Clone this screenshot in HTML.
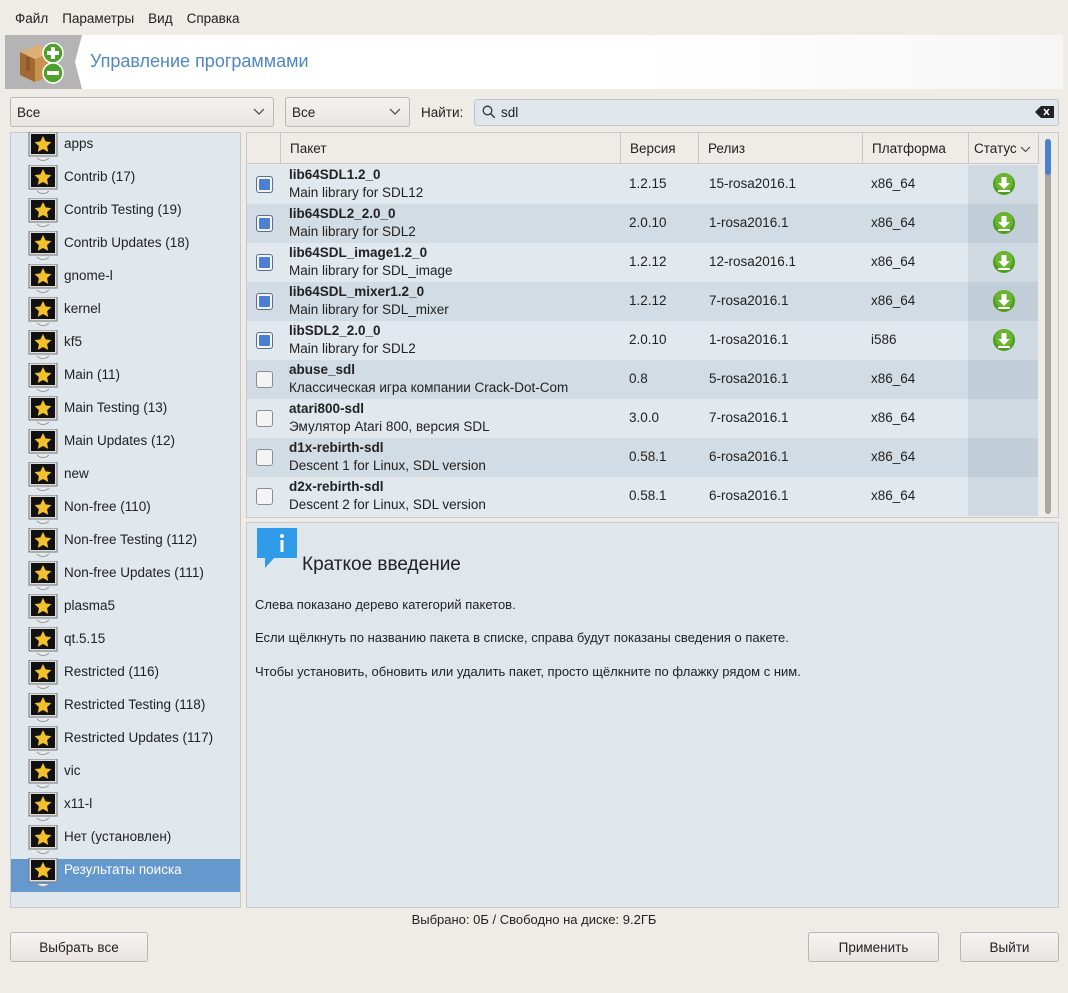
<!DOCTYPE html>
<html><head><meta charset="utf-8">
<style>
*{box-sizing:border-box;margin:0;padding:0}
body{width:1068px;height:993px;background:#efebe7;font-family:"Liberation Sans","DejaVu Sans",sans-serif;font-size:13px;color:#222;position:relative;overflow:hidden}
.a{position:absolute}
.menu span{margin-right:14px}
.combo{position:absolute;height:30px;border:1px solid #bdb9b4;border-radius:3px;background:linear-gradient(#f4f2f0,#e8e5e2);padding:7px 6px;font-size:13.5px}
.combo svg{position:absolute;right:8px;top:10px}
.left{left:10px;top:132px;width:231px;height:776px;background:#e0e7ed;border:1px solid #c6c9cc}
.it{position:absolute;left:0;width:229px;height:33px}
.it svg{position:absolute;left:17px;top:0}
.it span{position:absolute;left:53px;top:4px;font-size:13.5px}
.sel{background:#6599cd;color:#fff}
.tbl{left:246px;top:132px;width:813px;height:386px;border:1px solid #c6c9cc;background:#efebe7;overflow:hidden}
.hdr{position:absolute;top:0;height:31px;border-bottom:1px solid #c6c9cc;border-right:1px solid #c6c9cc;background:#efebe7;padding:8px 9px;font-size:13.5px;white-space:nowrap}
.row{position:absolute;left:0;width:791px;height:39px}
.row div{position:absolute;font-size:13.5px}
.cb{left:9px;top:11px;width:17px;height:17px;border:1px solid #8a8d90;border-radius:3px;background:#f4f4f4}
.cb.on::after{content:"";position:absolute;left:2px;top:2px;width:11px;height:11px;background:#4a7fd4;border-radius:1px}
.cb.on{border-color:#5a6f90}
.st{left:721px;top:0;width:70px;height:39px}
.info{left:246px;top:522px;width:813px;height:386px;background:#dfe6ec;border:1px solid #c6c9cc}
.btn{position:absolute;top:932px;height:30px;border:1px solid #b9b5b0;border-radius:3px;background:linear-gradient(#f6f4f2,#e7e4e1);text-align:center;padding-top:7px;font-size:13.5px}
</style></head><body>
<div class="a menu" style="left:15px;top:11px;font-size:13.5px"><span>Файл</span><span>Параметры</span><span>Вид</span><span>Справка</span></div>

<div class="a" style="left:5px;top:35px;width:1058px;height:54px;background:linear-gradient(90deg,#fff,#fff 60%,#f6f6f6)"></div>
<svg class="a" style="left:5px;top:35px" width="80" height="54"><polygon points="0,0 77,0 70,27 77,54 0,54" fill="#b4b4b4"/>
<polygon points="15,17 33,10 48,17 48,40 30,47 15,40" fill="#c9934f"/><polygon points="15,17 30,24 30,47 15,40" fill="#a06a30"/><polygon points="15,17 33,10 48,17 30,24" fill="#ddb078"/><rect x="21" y="22" width="4" height="14" fill="#8a5a28"/>
<circle cx="48" cy="18" r="10" fill="#4da02a" stroke="#fff" stroke-width="1.5"/><rect x="42" y="16" width="12" height="4" fill="#fff"/><rect x="46" y="12" width="4" height="12" fill="#fff"/>
<circle cx="48" cy="38" r="10" fill="#4da02a" stroke="#fff" stroke-width="1.5"/><rect x="42" y="36" width="12" height="4" fill="#fff"/></svg>
<div class="a" style="left:90px;top:51px;font-size:18px;color:#4f86c6">Управление программами</div>

<div class="combo" style="left:10px;top:97px;width:264px">Все<svg width="12" height="8"><path d="M1 1l5 5 5-5" stroke="#444" fill="none" stroke-width="1.2"/></svg></div>
<div class="combo" style="left:285px;top:97px;width:125px">Все<svg width="12" height="8"><path d="M1 1l5 5 5-5" stroke="#444" fill="none" stroke-width="1.2"/></svg></div>
<div class="a" style="left:421px;top:105px;font-size:13.5px">Найти:</div>
<div class="a" style="left:474px;top:99px;width:585px;height:27px;border:1px solid #c3c6c9;border-radius:3px;background:#dfe6ec"></div>
<svg class="a" style="left:482px;top:105px" width="14" height="14"><circle cx="5.5" cy="5.5" r="4.3" stroke="#333" fill="none" stroke-width="1.3"/><path d="M8.7 8.7l4 4" stroke="#333" stroke-width="1.4"/></svg>
<div class="a" style="left:501px;top:105px;font-size:13.5px">sdl</div>
<svg class="a" style="left:1035px;top:105px" width="19" height="14"><path d="M0 7l6-6h13v12H6z" fill="#222"/><path d="M9 4l5 6M14 4l-5 6" stroke="#fff" stroke-width="1.5"/></svg>

<div class="a left">
<div style="position:absolute;left:0;top:726px;width:229px;height:33px" class="sel"></div>
<div class="it" style="top:-1px"><svg width="30" height="33"><rect x="1" y="0" width="28" height="24" fill="#ddd" stroke="#777"/><rect x="3" y="2" width="24" height="20" fill="#111"/><path d="M15 4l2.6 5.4 5.8.7-4.3 4 1.1 5.8L15 17l-5.2 2.9 1.1-5.8-4.3-4 5.8-.7z" fill="#f3c12c"/><path d="M9 26q6 5 12 0" stroke="#999" fill="#eee"/></svg><span>apps</span></div>
<div class="it" style="top:32px"><svg width="30" height="33"><rect x="1" y="0" width="28" height="24" fill="#ddd" stroke="#777"/><rect x="3" y="2" width="24" height="20" fill="#111"/><path d="M15 4l2.6 5.4 5.8.7-4.3 4 1.1 5.8L15 17l-5.2 2.9 1.1-5.8-4.3-4 5.8-.7z" fill="#f3c12c"/><path d="M9 26q6 5 12 0" stroke="#999" fill="#eee"/></svg><span>Contrib (17)</span></div>
<div class="it" style="top:65px"><svg width="30" height="33"><rect x="1" y="0" width="28" height="24" fill="#ddd" stroke="#777"/><rect x="3" y="2" width="24" height="20" fill="#111"/><path d="M15 4l2.6 5.4 5.8.7-4.3 4 1.1 5.8L15 17l-5.2 2.9 1.1-5.8-4.3-4 5.8-.7z" fill="#f3c12c"/><path d="M9 26q6 5 12 0" stroke="#999" fill="#eee"/></svg><span>Contrib Testing (19)</span></div>
<div class="it" style="top:98px"><svg width="30" height="33"><rect x="1" y="0" width="28" height="24" fill="#ddd" stroke="#777"/><rect x="3" y="2" width="24" height="20" fill="#111"/><path d="M15 4l2.6 5.4 5.8.7-4.3 4 1.1 5.8L15 17l-5.2 2.9 1.1-5.8-4.3-4 5.8-.7z" fill="#f3c12c"/><path d="M9 26q6 5 12 0" stroke="#999" fill="#eee"/></svg><span>Contrib Updates (18)</span></div>
<div class="it" style="top:131px"><svg width="30" height="33"><rect x="1" y="0" width="28" height="24" fill="#ddd" stroke="#777"/><rect x="3" y="2" width="24" height="20" fill="#111"/><path d="M15 4l2.6 5.4 5.8.7-4.3 4 1.1 5.8L15 17l-5.2 2.9 1.1-5.8-4.3-4 5.8-.7z" fill="#f3c12c"/><path d="M9 26q6 5 12 0" stroke="#999" fill="#eee"/></svg><span>gnome-l</span></div>
<div class="it" style="top:164px"><svg width="30" height="33"><rect x="1" y="0" width="28" height="24" fill="#ddd" stroke="#777"/><rect x="3" y="2" width="24" height="20" fill="#111"/><path d="M15 4l2.6 5.4 5.8.7-4.3 4 1.1 5.8L15 17l-5.2 2.9 1.1-5.8-4.3-4 5.8-.7z" fill="#f3c12c"/><path d="M9 26q6 5 12 0" stroke="#999" fill="#eee"/></svg><span>kernel</span></div>
<div class="it" style="top:197px"><svg width="30" height="33"><rect x="1" y="0" width="28" height="24" fill="#ddd" stroke="#777"/><rect x="3" y="2" width="24" height="20" fill="#111"/><path d="M15 4l2.6 5.4 5.8.7-4.3 4 1.1 5.8L15 17l-5.2 2.9 1.1-5.8-4.3-4 5.8-.7z" fill="#f3c12c"/><path d="M9 26q6 5 12 0" stroke="#999" fill="#eee"/></svg><span>kf5</span></div>
<div class="it" style="top:230px"><svg width="30" height="33"><rect x="1" y="0" width="28" height="24" fill="#ddd" stroke="#777"/><rect x="3" y="2" width="24" height="20" fill="#111"/><path d="M15 4l2.6 5.4 5.8.7-4.3 4 1.1 5.8L15 17l-5.2 2.9 1.1-5.8-4.3-4 5.8-.7z" fill="#f3c12c"/><path d="M9 26q6 5 12 0" stroke="#999" fill="#eee"/></svg><span>Main (11)</span></div>
<div class="it" style="top:263px"><svg width="30" height="33"><rect x="1" y="0" width="28" height="24" fill="#ddd" stroke="#777"/><rect x="3" y="2" width="24" height="20" fill="#111"/><path d="M15 4l2.6 5.4 5.8.7-4.3 4 1.1 5.8L15 17l-5.2 2.9 1.1-5.8-4.3-4 5.8-.7z" fill="#f3c12c"/><path d="M9 26q6 5 12 0" stroke="#999" fill="#eee"/></svg><span>Main Testing (13)</span></div>
<div class="it" style="top:296px"><svg width="30" height="33"><rect x="1" y="0" width="28" height="24" fill="#ddd" stroke="#777"/><rect x="3" y="2" width="24" height="20" fill="#111"/><path d="M15 4l2.6 5.4 5.8.7-4.3 4 1.1 5.8L15 17l-5.2 2.9 1.1-5.8-4.3-4 5.8-.7z" fill="#f3c12c"/><path d="M9 26q6 5 12 0" stroke="#999" fill="#eee"/></svg><span>Main Updates (12)</span></div>
<div class="it" style="top:329px"><svg width="30" height="33"><rect x="1" y="0" width="28" height="24" fill="#ddd" stroke="#777"/><rect x="3" y="2" width="24" height="20" fill="#111"/><path d="M15 4l2.6 5.4 5.8.7-4.3 4 1.1 5.8L15 17l-5.2 2.9 1.1-5.8-4.3-4 5.8-.7z" fill="#f3c12c"/><path d="M9 26q6 5 12 0" stroke="#999" fill="#eee"/></svg><span>new</span></div>
<div class="it" style="top:362px"><svg width="30" height="33"><rect x="1" y="0" width="28" height="24" fill="#ddd" stroke="#777"/><rect x="3" y="2" width="24" height="20" fill="#111"/><path d="M15 4l2.6 5.4 5.8.7-4.3 4 1.1 5.8L15 17l-5.2 2.9 1.1-5.8-4.3-4 5.8-.7z" fill="#f3c12c"/><path d="M9 26q6 5 12 0" stroke="#999" fill="#eee"/></svg><span>Non-free (110)</span></div>
<div class="it" style="top:395px"><svg width="30" height="33"><rect x="1" y="0" width="28" height="24" fill="#ddd" stroke="#777"/><rect x="3" y="2" width="24" height="20" fill="#111"/><path d="M15 4l2.6 5.4 5.8.7-4.3 4 1.1 5.8L15 17l-5.2 2.9 1.1-5.8-4.3-4 5.8-.7z" fill="#f3c12c"/><path d="M9 26q6 5 12 0" stroke="#999" fill="#eee"/></svg><span>Non-free Testing (112)</span></div>
<div class="it" style="top:428px"><svg width="30" height="33"><rect x="1" y="0" width="28" height="24" fill="#ddd" stroke="#777"/><rect x="3" y="2" width="24" height="20" fill="#111"/><path d="M15 4l2.6 5.4 5.8.7-4.3 4 1.1 5.8L15 17l-5.2 2.9 1.1-5.8-4.3-4 5.8-.7z" fill="#f3c12c"/><path d="M9 26q6 5 12 0" stroke="#999" fill="#eee"/></svg><span>Non-free Updates (111)</span></div>
<div class="it" style="top:461px"><svg width="30" height="33"><rect x="1" y="0" width="28" height="24" fill="#ddd" stroke="#777"/><rect x="3" y="2" width="24" height="20" fill="#111"/><path d="M15 4l2.6 5.4 5.8.7-4.3 4 1.1 5.8L15 17l-5.2 2.9 1.1-5.8-4.3-4 5.8-.7z" fill="#f3c12c"/><path d="M9 26q6 5 12 0" stroke="#999" fill="#eee"/></svg><span>plasma5</span></div>
<div class="it" style="top:494px"><svg width="30" height="33"><rect x="1" y="0" width="28" height="24" fill="#ddd" stroke="#777"/><rect x="3" y="2" width="24" height="20" fill="#111"/><path d="M15 4l2.6 5.4 5.8.7-4.3 4 1.1 5.8L15 17l-5.2 2.9 1.1-5.8-4.3-4 5.8-.7z" fill="#f3c12c"/><path d="M9 26q6 5 12 0" stroke="#999" fill="#eee"/></svg><span>qt.5.15</span></div>
<div class="it" style="top:527px"><svg width="30" height="33"><rect x="1" y="0" width="28" height="24" fill="#ddd" stroke="#777"/><rect x="3" y="2" width="24" height="20" fill="#111"/><path d="M15 4l2.6 5.4 5.8.7-4.3 4 1.1 5.8L15 17l-5.2 2.9 1.1-5.8-4.3-4 5.8-.7z" fill="#f3c12c"/><path d="M9 26q6 5 12 0" stroke="#999" fill="#eee"/></svg><span>Restricted (116)</span></div>
<div class="it" style="top:560px"><svg width="30" height="33"><rect x="1" y="0" width="28" height="24" fill="#ddd" stroke="#777"/><rect x="3" y="2" width="24" height="20" fill="#111"/><path d="M15 4l2.6 5.4 5.8.7-4.3 4 1.1 5.8L15 17l-5.2 2.9 1.1-5.8-4.3-4 5.8-.7z" fill="#f3c12c"/><path d="M9 26q6 5 12 0" stroke="#999" fill="#eee"/></svg><span>Restricted Testing (118)</span></div>
<div class="it" style="top:593px"><svg width="30" height="33"><rect x="1" y="0" width="28" height="24" fill="#ddd" stroke="#777"/><rect x="3" y="2" width="24" height="20" fill="#111"/><path d="M15 4l2.6 5.4 5.8.7-4.3 4 1.1 5.8L15 17l-5.2 2.9 1.1-5.8-4.3-4 5.8-.7z" fill="#f3c12c"/><path d="M9 26q6 5 12 0" stroke="#999" fill="#eee"/></svg><span>Restricted Updates (117)</span></div>
<div class="it" style="top:626px"><svg width="30" height="33"><rect x="1" y="0" width="28" height="24" fill="#ddd" stroke="#777"/><rect x="3" y="2" width="24" height="20" fill="#111"/><path d="M15 4l2.6 5.4 5.8.7-4.3 4 1.1 5.8L15 17l-5.2 2.9 1.1-5.8-4.3-4 5.8-.7z" fill="#f3c12c"/><path d="M9 26q6 5 12 0" stroke="#999" fill="#eee"/></svg><span>vic</span></div>
<div class="it" style="top:659px"><svg width="30" height="33"><rect x="1" y="0" width="28" height="24" fill="#ddd" stroke="#777"/><rect x="3" y="2" width="24" height="20" fill="#111"/><path d="M15 4l2.6 5.4 5.8.7-4.3 4 1.1 5.8L15 17l-5.2 2.9 1.1-5.8-4.3-4 5.8-.7z" fill="#f3c12c"/><path d="M9 26q6 5 12 0" stroke="#999" fill="#eee"/></svg><span>x11-l</span></div>
<div class="it" style="top:692px"><svg width="30" height="33"><rect x="1" y="0" width="28" height="24" fill="#ddd" stroke="#777"/><rect x="3" y="2" width="24" height="20" fill="#111"/><path d="M15 4l2.6 5.4 5.8.7-4.3 4 1.1 5.8L15 17l-5.2 2.9 1.1-5.8-4.3-4 5.8-.7z" fill="#f3c12c"/><path d="M9 26q6 5 12 0" stroke="#999" fill="#eee"/></svg><span>Нет (установлен)</span></div>
<div class="it" style="top:725px;color:#fff"><svg width="30" height="33"><rect x="1" y="0" width="28" height="24" fill="#ddd" stroke="#777"/><rect x="3" y="2" width="24" height="20" fill="#111"/><path d="M15 4l2.6 5.4 5.8.7-4.3 4 1.1 5.8L15 17l-5.2 2.9 1.1-5.8-4.3-4 5.8-.7z" fill="#f3c12c"/><path d="M9 26q6 5 12 0" stroke="#999" fill="#eee"/></svg><span>Результаты поиска</span></div>
</div>

<div class="a tbl">
<div class="hdr" style="left:0;width:34px"></div>
<div class="hdr" style="left:34px;width:340px">Пакет</div>
<div class="hdr" style="left:374px;width:78px">Версия</div>
<div class="hdr" style="left:452px;width:164px">Релиз</div>
<div class="hdr" style="left:616px;width:106px">Платформа</div>
<div class="hdr" style="left:722px;width:70px;padding-left:5px;padding-right:0">Статус<svg width="11" height="7" style="margin-left:3px"><path d="M1 1l4.5 4.5L10 1" stroke="#444" fill="none" stroke-width="1.1"/></svg></div>
<div class="a" style="left:792px;top:0;width:21px;height:386px;background:#efebe7"></div>
<div class="a" style="left:798px;top:6px;width:6px;height:375px;background:#aaa6a2;border-radius:3px"></div>
<div class="a" style="left:798px;top:6px;width:6px;height:36px;background:#4a80d0;border-radius:3px"></div>

<div class="row" style="top:32px;background:#e1e8ee"><div class="cb on"></div><div style="left:42px;top:2px;font-weight:bold">lib64SDL1.2_0</div><div style="left:42px;top:20px">Main library for SDL12</div><div style="left:382px;top:11px">1.2.15</div><div style="left:462px;top:11px">15-rosa2016.1</div><div style="left:624px;top:11px">x86_64</div><div class="st" style="background:#cfd9e1"><svg width="24" height="24" style="position:absolute;left:24px;top:7px"><circle cx="12" cy="12" r="11" fill="#4e9e1e"/><circle cx="12" cy="10" r="9" fill="#69b52e"/><path d="M9.5 5h5v6h3.5L12 17l-6-6h3.5z" fill="#fff"/><rect x="6" y="18" width="12" height="2" fill="#fff"/></svg></div></div>
<div class="row" style="top:71px;background:#d2dce4"><div class="cb on"></div><div style="left:42px;top:2px;font-weight:bold">lib64SDL2_2.0_0</div><div style="left:42px;top:20px">Main library for SDL2</div><div style="left:382px;top:11px">2.0.10</div><div style="left:462px;top:11px">1-rosa2016.1</div><div style="left:624px;top:11px">x86_64</div><div class="st" style="background:#c1ced8"><svg width="24" height="24" style="position:absolute;left:24px;top:7px"><circle cx="12" cy="12" r="11" fill="#4e9e1e"/><circle cx="12" cy="10" r="9" fill="#69b52e"/><path d="M9.5 5h5v6h3.5L12 17l-6-6h3.5z" fill="#fff"/><rect x="6" y="18" width="12" height="2" fill="#fff"/></svg></div></div>
<div class="row" style="top:110px;background:#e1e8ee"><div class="cb on"></div><div style="left:42px;top:2px;font-weight:bold">lib64SDL_image1.2_0</div><div style="left:42px;top:20px">Main library for SDL_image</div><div style="left:382px;top:11px">1.2.12</div><div style="left:462px;top:11px">12-rosa2016.1</div><div style="left:624px;top:11px">x86_64</div><div class="st" style="background:#cfd9e1"><svg width="24" height="24" style="position:absolute;left:24px;top:7px"><circle cx="12" cy="12" r="11" fill="#4e9e1e"/><circle cx="12" cy="10" r="9" fill="#69b52e"/><path d="M9.5 5h5v6h3.5L12 17l-6-6h3.5z" fill="#fff"/><rect x="6" y="18" width="12" height="2" fill="#fff"/></svg></div></div>
<div class="row" style="top:149px;background:#d2dce4"><div class="cb on"></div><div style="left:42px;top:2px;font-weight:bold">lib64SDL_mixer1.2_0</div><div style="left:42px;top:20px">Main library for SDL_mixer</div><div style="left:382px;top:11px">1.2.12</div><div style="left:462px;top:11px">7-rosa2016.1</div><div style="left:624px;top:11px">x86_64</div><div class="st" style="background:#c1ced8"><svg width="24" height="24" style="position:absolute;left:24px;top:7px"><circle cx="12" cy="12" r="11" fill="#4e9e1e"/><circle cx="12" cy="10" r="9" fill="#69b52e"/><path d="M9.5 5h5v6h3.5L12 17l-6-6h3.5z" fill="#fff"/><rect x="6" y="18" width="12" height="2" fill="#fff"/></svg></div></div>
<div class="row" style="top:188px;background:#e1e8ee"><div class="cb on"></div><div style="left:42px;top:2px;font-weight:bold">libSDL2_2.0_0</div><div style="left:42px;top:20px">Main library for SDL2</div><div style="left:382px;top:11px">2.0.10</div><div style="left:462px;top:11px">1-rosa2016.1</div><div style="left:624px;top:11px">i586</div><div class="st" style="background:#cfd9e1"><svg width="24" height="24" style="position:absolute;left:24px;top:7px"><circle cx="12" cy="12" r="11" fill="#4e9e1e"/><circle cx="12" cy="10" r="9" fill="#69b52e"/><path d="M9.5 5h5v6h3.5L12 17l-6-6h3.5z" fill="#fff"/><rect x="6" y="18" width="12" height="2" fill="#fff"/></svg></div></div>
<div class="row" style="top:227px;background:#d2dce4"><div class="cb"></div><div style="left:42px;top:2px;font-weight:bold">abuse_sdl</div><div style="left:42px;top:20px">Классическая игра компании Crack-Dot-Com</div><div style="left:382px;top:11px">0.8</div><div style="left:462px;top:11px">5-rosa2016.1</div><div style="left:624px;top:11px">x86_64</div><div class="st" style="background:#c1ced8"></div></div>
<div class="row" style="top:266px;background:#e1e8ee"><div class="cb"></div><div style="left:42px;top:2px;font-weight:bold">atari800-sdl</div><div style="left:42px;top:20px">Эмулятор Atari 800, версия SDL</div><div style="left:382px;top:11px">3.0.0</div><div style="left:462px;top:11px">7-rosa2016.1</div><div style="left:624px;top:11px">x86_64</div><div class="st" style="background:#cfd9e1"></div></div>
<div class="row" style="top:305px;background:#d2dce4"><div class="cb"></div><div style="left:42px;top:2px;font-weight:bold">d1x-rebirth-sdl</div><div style="left:42px;top:20px">Descent 1 for Linux, SDL version</div><div style="left:382px;top:11px">0.58.1</div><div style="left:462px;top:11px">6-rosa2016.1</div><div style="left:624px;top:11px">x86_64</div><div class="st" style="background:#c1ced8"></div></div>
<div class="row" style="top:344px;background:#e1e8ee"><div class="cb"></div><div style="left:42px;top:2px;font-weight:bold">d2x-rebirth-sdl</div><div style="left:42px;top:20px">Descent 2 for Linux, SDL version</div><div style="left:382px;top:11px">0.58.1</div><div style="left:462px;top:11px">6-rosa2016.1</div><div style="left:624px;top:11px">x86_64</div><div class="st" style="background:#cfd9e1"></div></div>
</div>

<div class="a info">
<svg class="a" style="left:10px;top:5px" width="42" height="42"><rect x="0" y="0" width="40" height="30" fill="#2f9ae8"/><polygon points="8,29 18,29 8,40" fill="#2f9ae8"/><circle cx="25" cy="8" r="2" fill="#fff"/><rect x="23.5" y="12" width="3" height="12" fill="#fff"/></svg>
<div class="a" style="left:55px;top:31px;font-size:19px">Краткое введение</div>
<div class="a" style="left:8px;top:74px;font-size:13px">Слева показано дерево категорий пакетов.</div>
<div class="a" style="left:8px;top:107px;font-size:13px">Если щёлкнуть по названию пакета в списке, справа будут показаны сведения о пакете.</div>
<div class="a" style="left:8px;top:141px;font-size:13px">Чтобы установить, обновить или удалить пакет, просто щёлкните по флажку рядом с ним.</div>
</div>

<div class="a" style="left:0;width:1068px;top:912px;text-align:center;font-size:13px">Выбрано: 0Б / Свободно на диске: 9.2ГБ</div>
<div class="btn" style="left:10px;width:138px">Выбрать все</div>
<div class="btn" style="left:808px;width:131px">Применить</div>
<div class="btn" style="left:960px;width:99px">Выйти</div>
</body></html>
